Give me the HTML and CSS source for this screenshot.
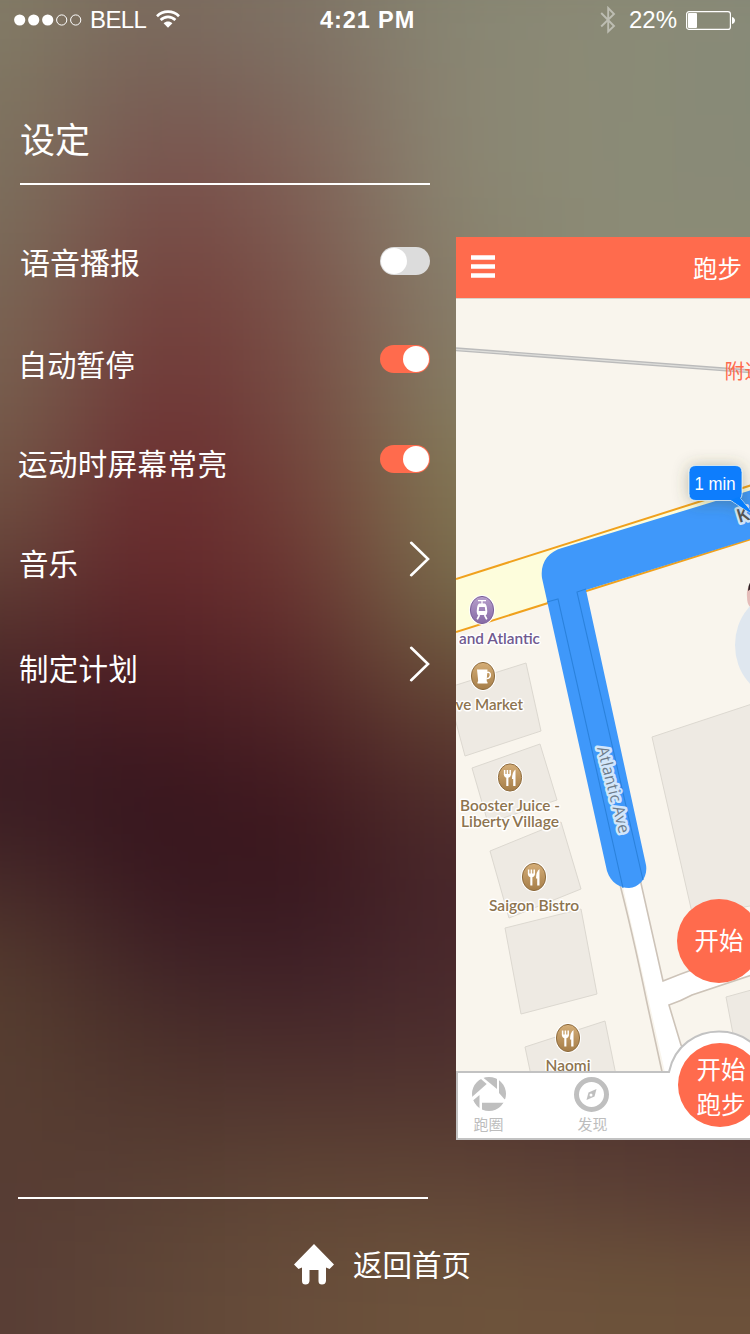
FILE: index.html
```html
<!DOCTYPE html>
<html lang="zh-CN">
<head>
<meta charset="utf-8">
<title>设定</title>
<link rel="stylesheet" href="styles.css">
</head>
<body>
<div class="screen">
  <div class="backdrop">
    <div class="glow g0"></div><div class="glow g1"></div><div class="glow g2"></div><div class="glow g3"></div>
    <div class="glow g4"></div><div class="glow g5"></div><div class="glow g6"></div><div class="glow g7"></div>
    <div class="glow g8"></div><div class="glow g9"></div><div class="glow g10"></div><div class="glow g11"></div>
    <div class="glow g12"></div><div class="glow g13"></div><div class="glow g14"></div><div class="glow g15"></div>
    <div class="glow g16"></div>
  </div>

  <header class="status">
    <div class="status-left">
      <svg class="signal" width="68" height="12" viewBox="0 0 68 12">
        <g fill="#fff"><circle cx="5.7" cy="6" r="5.6"/><circle cx="19.7" cy="6" r="5.6"/><circle cx="33.7" cy="6" r="5.6"/></g>
        <g fill="none" stroke="#fff"><circle cx="47.7" cy="6" r="5.1"/><circle cx="61.7" cy="6" r="5.1"/></g>
      </svg>
      <span class="carrier">BELL</span>
      <svg class="wifi" width="24" height="18" viewBox="0 0 24 18">
        <g fill="none" stroke="#fff" stroke-width="2.7"><path d="M1 6.2C7 .2 17 .2 23 6.2"/><path d="M4.6 10C9 5.8 15 5.8 19.4 10"/></g>
        <path d="M7.6 13.3c2.6-2.5 6.2-2.5 8.8 0L12 17.7z" fill="#fff"/>
      </svg>
    </div>
    <div class="clock">4:21 PM</div>
    <div class="status-right">
      <svg class="bt" width="16" height="28" viewBox="0 0 16 28"><path d="M1.2 7 14 20 8.2 25.5V2L14 8 1.2 20.5" fill="none" stroke="#bdbdb2" stroke-width="1.9"/></svg>
      <span class="percent">22%</span>
      <svg class="battery" width="49" height="19" viewBox="0 0 49 19">
        <rect x=".6" y=".6" width="43.8" height="17.8" rx="2.5" fill="none" stroke="#fff" stroke-width="1.2"/>
        <rect x="2" y="2" width="9" height="15" rx="1" fill="#fff"/>
        <path d="M46 6c4 1 4 6 0 7z" fill="#fff"/>
      </svg>
    </div>
  </header>

  <main class="main">
    <nav class="menu">
      <h1 class="title">设定</h1>
      <ul class="rows">
        <li class="row r1"><span class="label">语音播报</span><span class="toggle"></span></li>
        <li class="row r2"><span class="label">自动暂停</span><span class="toggle on"></span></li>
        <li class="row r3"><span class="label">运动时屏幕常亮</span><span class="toggle on"></span></li>
        <li class="row r4"><span class="label">音乐</span><svg class="chevron" width="22" height="36" viewBox="0 0 22 36"><path d="M3.2 1.8 20 18 3.2 34.2"/></svg></li>
        <li class="row r5"><span class="label">制定计划</span><svg class="chevron" width="22" height="36" viewBox="0 0 22 36"><path d="M3.2 1.8 20 18 3.2 34.2"/></svg></li>
      </ul>
    </nav>

    <section class="preview">
      <div class="appbar"><svg class="burger" width="24" height="24" viewBox="0 0 24 24"><path d="M0 2.5h24M0 11.5h24M0 20.5h24" stroke="#fff" stroke-width="4.4"/></svg><span class="appbar-title">跑步</span></div>
      <svg class="map" width="294" height="842" viewBox="456 298 294 842">
        <defs>
          <linearGradient id="tan" x1="0" y1="0" x2="0" y2="1"><stop offset="0" stop-color="#d5ae78"/><stop offset="1" stop-color="#a57d48"/></linearGradient>
          <linearGradient id="violet" x1="0" y1="0" x2="0" y2="1"><stop offset="0" stop-color="#b7a0cb"/><stop offset="1" stop-color="#8569a5"/></linearGradient>
          <filter id="shade" x="-50%" y="-50%" width="200%" height="200%"><feDropShadow dx="0" dy="1" stdDeviation="8" flood-color="#4c5034" flood-opacity=".38"/></filter>
          <clipPath id="lens"><circle r="17"/></clipPath>
          <g id="pin"><ellipse rx="13" ry="15" fill="#fff"/><ellipse rx="11.6" ry="13.6" fill="url(#tan)" stroke="#8f6d3f" stroke-width="1"/></g>
          <g id="food"><use href="#pin"/><path d="M-5.4-7.5v5M-2.6-7.500v5M.2-7.500v5" fill="none" stroke="#fff" stroke-width="1.500"/><path d="M-6.100-3.500H.900Q.9-.3-1.600.2v8.300h-2.100V.2Q-6.100-.3-6.100-3.500zM5.500-8v16.500H3.200V1.500H2Q2-5.500 5.500-8z" fill="#fff"/></g>
        </defs>
        <rect x="456" y="298" width="294" height="842" fill="#f9f5ed"/>
        <path d="M456 298.5h294" stroke="#d9d2c8"/>
        <path d="M456 349.3 750 371.3" stroke="#bbb" stroke-width="4"/>
        <path d="M456 349.3 750 371.3" stroke="#dededb" stroke-width="1.2"/>

        <g fill="#eeeae3" stroke="#dcd8d0">
          <path d="M450 687 526 663 541 731 465 756 450 700z"/>
          <path d="M472 768 540 744 557 800 488 823z"/>
          <path d="M490 851 561 822 581 889 509 918z"/>
          <path d="M505 928 581 909 597 994 521 1014z"/>
          <path d="M525 1047 605 1021 617 1080 532 1080z"/>
          <path d="M652 737 755 703V905L693 917z"/>
          <path d="M726 997 755 989V1060H738z"/>
        </g>
        <path d="M456 579 755 484V538L456 632z" fill="#fdfddc"/>
        <path d="M456 579 755 484M456 632 755 538" fill="none" stroke="#f0a11d" stroke-width="2"/>

        <path d="M558 599 669 1090 696 1090 669 1005 693 994 755 974V956L690 970 663 981 578 592z" fill="#fff"/>
        <path d="M617 873Q632 930 647 1003L666 1090M638 870 663 981Q680 974 700 967L755 945M696 1090Q690 1050 681 1045L669 1005Q681 1001 692 995L755 974" fill="none" stroke="#cdc3b8" stroke-width="1.6"/>

        <path d="M755 489 562 548C548 552 540 563 542 578L607 871C611 883 620 888 629 888 640 887 648 877 646 865L586 590 755 537.500z" fill="#3f98fa"/>
        <path d="M547 602 558 599 623 888M586 589 577 592 643 880" fill="none" stroke="#2b82dc" stroke-width="1.1"/>

        <g class="poi tan">
          <text x="455.500" y="710" textLength="67.500" lengthAdjust="spacingAndGlyphs">ve Market</text>
          <text x="460" y="811" textLength="100" lengthAdjust="spacingAndGlyphs">Booster Juice -</text>
          <text x="461" y="827" textLength="98" lengthAdjust="spacingAndGlyphs">Liberty Village</text>
          <text x="489" y="910.500" textLength="90" lengthAdjust="spacingAndGlyphs">Saigon Bistro</text>
          <text x="545.5" y="1071" textLength="45" lengthAdjust="spacingAndGlyphs">Naomi</text>
        </g>
        <text class="poi violet" x="459" y="644" textLength="81" lengthAdjust="spacingAndGlyphs">and Atlantic</text>
        <g transform="translate(482 610)">
          <ellipse rx="13" ry="15" fill="#fff"/><ellipse rx="11.6" ry="13.6" fill="url(#violet)" stroke="#7b5f9a"/>
          <path d="M-4-9.3h8M0-9v3" stroke="#fff" stroke-width="1.3"/>
          <path fill="#fff" fill-rule="evenodd" d="M-3-6.6h6q2 1 2.3 8Q5 5 3.6 5h-7.2Q-5 5-5.3 1.4-5-5.6-3-6.6zM-2.8-3-3.3 1h6.6L2.8-3z"/>
          <path d="M-2.6 5-4.8 9.3M2.6 5 4.8 9.3" stroke="#fff" stroke-width="1.7"/>
        </g>
        <g transform="translate(483 676)"><use href="#pin"/><path d="M-6-6.5H4.5L3.7 4Q3.4 5.5 4.5 6v1.4h-10V6q.9-.5.6-2z" fill="#fff"/><path d="M3.5-3.5Q7.7-4.5 7.3-.5 7 2.8 3.4 2.6" fill="none" stroke="#fff" stroke-width="1.4"/></g>
        <use href="#food" transform="translate(510 777.5)"/>
        <use href="#food" transform="translate(534 877)"/>
        <use href="#food" transform="translate(568 1038)"/>

        <text class="street" transform="translate(597 748) rotate(75.5)" x="0" y="0" textLength="89">Atlantic Ave</text>
        <text class="street king" transform="translate(739 523) rotate(-17)">K</text>
        <ellipse cx="778" cy="645" rx="43" ry="51" fill="#dfe7ef"/>
        <path d="M752 582Q746 588 747 597 747 606 752 608z" fill="#e5bcb9"/><path d="M752 580Q748 584 748 591l4-3z" fill="#2e2024"/>
        <g filter="url(#shade)"><path d="M696 465.500h39q7 0 7 7v21q0 3-1.500 5L754 515Q742 508 731 500.500H696q-7 0-7-7v-21q0-7 7-7z" fill="#077dfd" stroke="#e9f1ee" stroke-width=".8"/></g>
        <path d="M739 497 754 515Q742 508 731 500z" fill="#077dfd"/>
        <text class="bubble" x="694.500" y="490" textLength="41" lengthAdjust="spacingAndGlyphs">1 min</text>
        <text class="nearby" x="724.500" y="379">附近</text>

        <circle cx="719" cy="941" r="42" fill="#ff6b4d"/>
        <text class="go" x="694.500" y="949.500">开始</text>

        <path d="M457 1139V1072H669C680 1018 758 1018 769 1072V1139z" fill="#fff" stroke="#c2c2c2" stroke-width="2"/>
        <circle cx="720" cy="1085" r="42" fill="#ff6b4d"/>
        <text class="go" x="696.500" y="1079">开始</text><text class="go" x="696.500" y="1113.500">跑步</text>
        <g transform="translate(489 1094)"><g clip-path="url(#lens)" fill="#bfbfbf">
          <path d="M-18 4-2.300-10-8-15-18-12z"/>
          <path d="M-5-18H8V-5L-6-16.500z"/>
          <path d="M10-18h8V5.300H15.500L10-1z"/>
          <path d="M-7 8.700H15L8 18H-7z"/>
          <path d="M-16 6.500-9.500 1V18z"/>
        </g></g>
        <circle cx="591.500" cy="1094.500" r="15" fill="none" stroke="#bfbfbf" stroke-width="5"/>
        <path d="M596.500 1089 588.500 1092.500 586.500 1100 594.500 1096.500z" fill="#bfbfbf"/><circle cx="591" cy="1095" r="1.500" fill="#fff"/>
        <text class="tab" x="473.500" y="1130">跑圈</text><text class="tab" x="577.500" y="1130">发现</text>
      </svg>
    </section>
  </main>

  <footer class="footer">
    <div class="rule"></div>
    <a class="home">
      <svg class="house" width="42" height="42" viewBox="0 0 42 42"><path d="M21 1 41 21.500 36.500 26 33 24.500V38q-.5 3.500-4 3.500T25.500 38V27H16.500V38q-.5 3.500-4 3.500T9 38V24.500L5.500 26 1 21.500z" fill="#fff"/></svg>
      <span>返回首页</span>
    </a>
  </footer>
</div>
</body>
</html>
```

FILE: styles.css
```css
* { box-sizing: border-box; }
body { margin: 0; background: #5a4036; color: #fff; font-family: "Liberation Sans", "Noto Sans CJK SC", sans-serif; }
.screen { position: relative; isolation: isolate; width: 750px; height: 1334px; overflow: hidden; display: flex; flex-direction: column; }

/* Blurred colour field behind the drawer */
.backdrop { position: absolute; z-index: -1; inset: -80px -150px; display: flex; flex-direction: column; filter: blur(42px); }
.glow { height: 80px; flex: none; }
.g0 { height: 120px; background: linear-gradient(90deg, #837d68 150px, #7b6b5e 300px, #7f7466 450px, #878673 600px, #8b8a76 750px, #888a78 900px); }
.g1 { background: linear-gradient(90deg, #807762 150px, #785f55 300px, #7e6b5f 450px, #8a8572 600px, #8b8b76 750px, #878a77 900px); }
.g2 { background: linear-gradient(90deg, #7e725f 150px, #79524d 320px, #7f6257 450px, #8a8572 600px, #8b8b76 750px, #888a77 900px); }
.g3 { background: linear-gradient(90deg, #7b6c5a 150px, #764742 320px, #7d5a50 450px, #89826d 600px, #8b8b76 750px); }
.g4 { background: linear-gradient(90deg, #7a6453 150px, #733d3a 320px, #795147 450px, #877c68 600px, #8b8b76 750px); }
.g5 { background: linear-gradient(90deg, #775f4e 150px, #6e3435 320px, #754b42 450px, #857c60 600px, #8b8b76 750px); }
.g6 { background: linear-gradient(90deg, #725444 150px, #6a2b2e 310px, #72433a 450px, #827653 600px, #857b5c 750px); }
.g7 { background: linear-gradient(90deg, #65443a 150px, #65272b 300px, #6c3833 450px, #7c704f 600px, #7c704f 750px); }
.g8 { background: linear-gradient(90deg, #522e2b 150px, #562126 300px, #602d2c 450px, #6f5b40 600px, #6f5b40 750px); }
.g9 { background: linear-gradient(90deg, #422126 150px, #451a21 300px, #4e2326 450px, #613f32 600px, #613f32 750px); }
.g10 { background: linear-gradient(90deg, #3b1d23 150px, #37161e 290px, #41191f 450px, #502e2b 600px, #502e2b 750px); }
.g11 { background: linear-gradient(90deg, #472a29 150px, #38171f 320px, #39181f 450px, #49272a 600px, #49272a 750px); }
.g12 { background: linear-gradient(90deg, #543a2e 150px, #3f2226 320px, #3e1f26 450px, #4a292c 600px, #4a292c 750px); }
.g13 { background: linear-gradient(90deg, #573f31 150px, #4b302a 300px, #492b2b 450px, #4d2f2e 600px, #4d2f2e 750px); }
.g14 { background: linear-gradient(90deg, #583e32 150px, #533930 300px, #563a31 450px, #563a31 600px, #503430 900px); }
.g15 { background: linear-gradient(90deg, #573c34 150px, #5a4135 300px, #614736 450px, #634838 600px, #583b34 900px); }
.g16 { height: 220px; background: linear-gradient(90deg, #583d35 150px, #5f4637 300px, #684d3a 450px, #6d533b 600px, #6c513a 900px); }

/* Status bar */
.status { height: 40px; padding: 0 15px 0 14px; display: grid; grid-template-columns: 306px 1fr auto; align-items: center; font-size: 24px; line-height: 40px; }
.status-left, .status-right { display: flex; align-items: center; }
.status-right { justify-content: flex-end; }
.carrier { margin-left: 8px; width: 58px; letter-spacing: -.6px; }
.wifi { margin-left: 8px; margin-bottom: 2px; }
.clock { font-weight: 700; font-size: 23.5px; letter-spacing: .9px; }
.bt { margin-right: 13px; }
.percent { margin-right: 9px; }

/* Drawer */
.main { height: 1100px; display: flex; }
.menu { width: 456px; padding: 69px 26px 0 18px; }
.title { margin: 0 0 0 2px; height: 76px; border-bottom: 2px solid #fff; font-size: 35px; line-height: 63px; font-weight: 400; }
.rows { margin: 27px 0 0; padding: 0; list-style: none; }
.row { height: 98px; display: flex; align-items: center; justify-content: space-between; font-size: 29.5px; }
.r1 .label { padding-left: 2px; font-size: 30px; }
.r2 .label { padding-top: 8px; font-size: 29.2px; }
.r3 { height: 102px; }
.r3 .label { padding-top: 6px; letter-spacing: .4px; }
.r4 .label { padding: 6px 0 0 1px; }
.r5 { height: 112px; }
.r5 .label { padding: 6px 0 0 1px; letter-spacing: .3px; }
.toggle { display: flex; width: 50px; height: 28px; padding: 1px; border-radius: 14px; background: #dcdcdc; }
.toggle::before { content: ""; width: 26px; height: 26px; border-radius: 50%; background: #fff; }
.toggle.on { justify-content: flex-end; background: #ff6b4d; }
.chevron { fill: none; stroke: #fff; stroke-width: 2.6; stroke-linecap: round; }

/* App card */
.preview { margin-top: 197px; width: 294px; height: 903px; flex: none; overflow: hidden; }
.appbar { height: 61px; padding: 0 8px 0 15px; display: flex; align-items: center; justify-content: space-between; background: #ff6b4d; font-size: 24.5px; }
.burger { margin-bottom: 2px; }
.map { display: block; }
.poi { font: 600 16px Lato, "Open Sans", sans-serif; paint-order: stroke; stroke: #fff; stroke-width: 3px; stroke-linejoin: round; }
.tan { fill: #8d744f; }
.violet { fill: #705a8f; }
.street { font: 16px "Open Sans", sans-serif; fill: #6f7d8c; paint-order: stroke; stroke: #d2e6fa; stroke-width: 5px; stroke-linejoin: round; }
.king { font-size: 19px; font-weight: 600; fill: #555; }
.bubble { font-size: 19px; fill: #fff; }
.nearby { font-size: 20px; fill: #ff6b4d; }
.go { font-size: 24.5px; fill: #fff; }
.tab { font-size: 15px; fill: #bdbdbd; }

/* Footer */
.footer { padding: 57px 0 0 18px; }
.rule { width: 410px; height: 2px; background: #fff; }
.home { margin: 42px 0 0 275px; display: flex; align-items: center; gap: 18px; font-size: 29.5px; line-height: 50px; }
.house { margin-bottom: 4px; }
```
